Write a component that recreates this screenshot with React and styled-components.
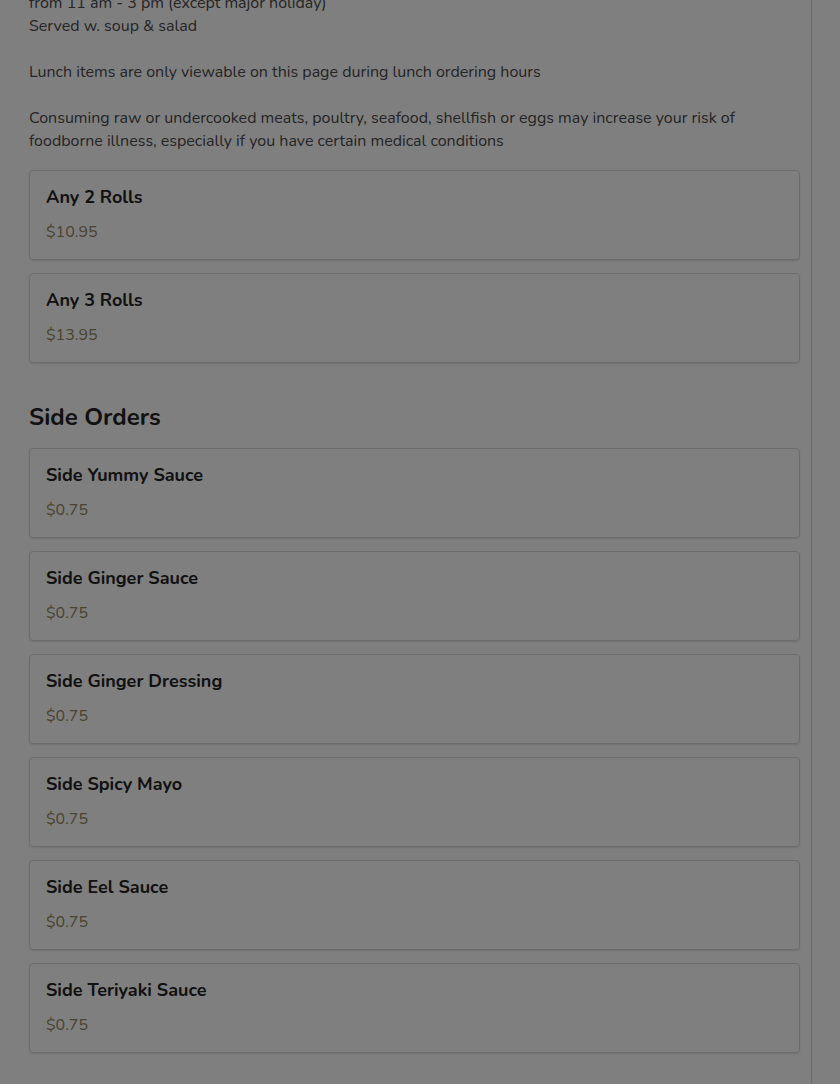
import React from "react";
import styled, { createGlobalStyle } from "styled-components";

const GlobalStyle = createGlobalStyle`
  html, body {
    margin: 0;
    padding: 0;
    background: #ffffff;
    font-family: "Nunito", "Lato", "Noto Sans", sans-serif;
    color: #222222;
  }
  * {
    box-sizing: border-box;
  }
`;

const Page = styled.div`
  display: flex;
  min-height: 1084px;
  overflow: hidden;
`;

const MenuColumn = styled.main`
  width: 812px;
  flex-shrink: 0;
  border-right: 1px solid #d4d4d4;
  padding: 0 11px 40px 29px;
  display: flex;
  flex-direction: column;
`;

const Notes = styled.div`
  margin-top: -8px;
  font-size: 16px;
  line-height: 23px;
  color: #4a4a4a;
  white-space: pre-line;
`;

const Section = styled.section`
  display: flex;
  flex-direction: column;
  gap: 13px;
  margin-top: ${(p) => p.$top || 0}px;
`;

const SectionTitle = styled.h2`
  margin: 0 0 5px;
  font-size: 24px;
  line-height: 26px;
  font-weight: 700;
  color: #222222;
`;

const Card = styled.div`
  height: 90px;
  border: 1px solid #d8d8d8;
  border-radius: 4px;
  box-shadow: 0 1px 2px rgba(0, 0, 0, 0.12);
  padding: 14px 16px 0;
  display: flex;
  flex-direction: column;
  gap: 12px;
`;

const ItemName = styled.div`
  font-size: 18px;
  line-height: 24px;
  font-weight: 700;
  color: #222222;
`;

const ItemPrice = styled.div`
  font-size: 16px;
  line-height: 22px;
  color: #928660;
`;

const Dim = styled.div`
  position: fixed;
  inset: 0;
  background: rgba(0, 0, 0, 0.5);
`;

const notes = `from 11 am - 3 pm (except major holiday)
Served w. soup & salad

Lunch items are only viewable on this page during lunch ordering hours

Consuming raw or undercooked meats, poultry, seafood, shellfish or eggs may increase your risk of foodborne illness, especially if you have certain medical conditions`;

const lunchItems = [
  { name: "Any 2 Rolls", price: "$10.95" },
  { name: "Any 3 Rolls", price: "$13.95" },
];

const sideItems = [
  "Side Yummy Sauce",
  "Side Ginger Sauce",
  "Side Ginger Dressing",
  "Side Spicy Mayo",
  "Side Eel Sauce",
  "Side Teriyaki Sauce",
].map((name) => ({ name, price: "$0.75" }));

const MenuCard = ({ item }) => (
  <Card>
    <ItemName>{item.name}</ItemName>
    <ItemPrice>{item.price}</ItemPrice>
  </Card>
);

const App = () => {
  return (
    <>
      <GlobalStyle />
      <Page>
        <MenuColumn>
          <Notes>{notes}</Notes>
          <Section $top={17}>
            {lunchItems.map((item) => (
              <MenuCard key={item.name} item={item} />
            ))}
          </Section>
          <Section $top={41}>
            <SectionTitle>Side Orders</SectionTitle>
            {sideItems.map((item) => (
              <MenuCard key={item.name} item={item} />
            ))}
          </Section>
        </MenuColumn>
      </Page>
      <Dim />
    </>
  );
};

export default App;
